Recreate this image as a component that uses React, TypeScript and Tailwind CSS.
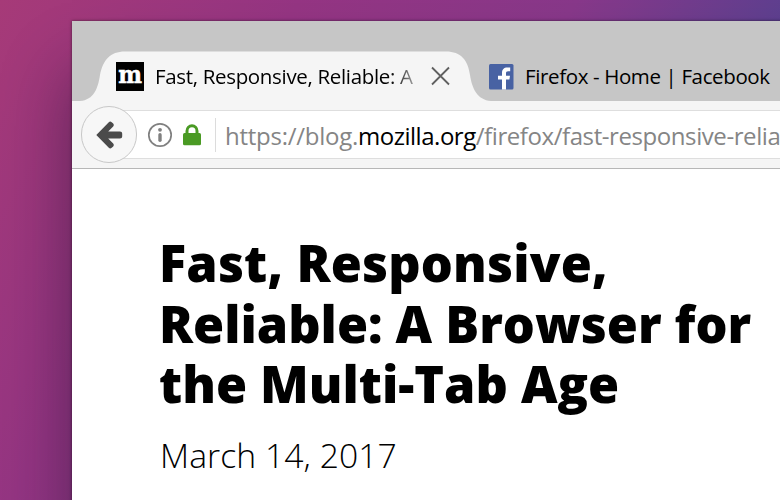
function TabStrip() {
  return (
    <div className="relative isolate flex h-[80px] items-start bg-[#c6c6c6]">
      <svg className="absolute top-0 left-0 -z-10" width="708" height="80" viewBox="0 0 708 80">
        <path
          d="M0 80H8C22 79 26 67 28 54C31 39 38 30.5 53 30.5H374C389 30.5 396 39 398 54C400 67 405 79 419 80Z"
          fill="#f5f5f5"
        />
      </svg>
      <div className="flex h-[80px] w-[416px] shrink-0 items-start pt-[41px] pl-[44px]">
        <svg className="shrink-0" width="28" height="29" viewBox="0 0 28 29">
          <rect width="28" height="29" fill="black" />
          <text
            x="2.3"
            y="21"
            fill="white"
            stroke="white"
            strokeWidth="0.5"
            textLength="23.8"
            lengthAdjust="spacingAndGlyphs"
            className="font-['DejaVu_Serif',serif] text-[24px] font-bold"
          >
            m
          </text>
        </svg>
        <div className="ml-[11px] w-[262px] shrink-0 overflow-hidden bg-linear-to-r from-black from-88% to-[#b8b8b8] bg-clip-text text-[20.5px] leading-[28px] tracking-[-0.33px] whitespace-nowrap text-transparent">
          Fast, Responsive, Reliable: A
        </div>
        <svg className="mt-[4px] ml-[14px] shrink-0" width="20" height="20" viewBox="0 0 20 20">
          <path d="M1 1.5L18 18.5M18 1.5L1 18.5" stroke="#606060" strokeWidth="1.8" />
        </svg>
      </div>
      <div className="flex shrink-0 items-start pt-[41px]">
        <svg className="mt-[2px] ml-[1px]" width="25" height="26" viewBox="0 0 25 26">
          <rect width="24.5" height="25.5" rx="1.5" fill="#4862a3" />
          <path
            d="M13 25.5V15.5H9V11.7H13V9C13 5.5 15 3.6 18.2 3.6H21.2V7.2H19.2C17.4 7.2 17 8 17 9.3V11.7H21L20.4 15.5H17V25.5Z"
            fill="white"
          />
        </svg>
        <div className="ml-[11px] text-[20.5px] leading-[28px] tracking-[-0.37px] whitespace-nowrap text-black">
          Firefox - Home | Facebook
        </div>
      </div>
    </div>
  );
}

function NavBar() {
  return (
    <div className="flex h-[68px] items-start border-b border-[#b7b7b7] bg-[#f5f5f5] pt-[5px] pl-[9px]">
      <div className="z-10 flex h-[57px] w-[56px] shrink-0 items-center justify-center rounded-full border border-[#c8c8c8] bg-[#f7f7f7]">
        <svg width="28" height="30" viewBox="0 0 28 30">
          <path
            d="M1.3 15L13.8 2.2Q15.2 0.9 16.7 2.2L18.2 3.6Q19.6 5 18.2 6.5L13.2 11.5H25Q27.2 11.5 27.2 13.5V16.5Q27.2 18.5 25 18.5H13.2L18.2 23.5Q19.6 25 18.2 26.4L16.7 27.8Q15.2 29.1 13.8 27.8Z"
            fill="#4b4b4b"
          />
        </svg>
      </div>
      <div className="mt-[4px] -ml-[28px] flex h-[49px] w-[671px] shrink-0 items-center border-y border-[#dedede] bg-white pl-[38px]">
        <svg className="shrink-0" width="26" height="26" viewBox="0 0 26 26">
          <circle cx="13" cy="13" r="11.2" fill="none" stroke="#808080" strokeWidth="1.7" />
          <circle cx="13" cy="7.8" r="1.9" fill="#808080" />
          <path d="M13 12.8V18.2" stroke="#808080" strokeWidth="3.4" strokeLinecap="round" />
        </svg>
        <svg className="ml-[9px] shrink-0" width="20" height="22" viewBox="0 0 20 22">
          <path d="M5 10V7A5 5.2 0 0 1 15 7V10" fill="none" stroke="#4a9a24" strokeWidth="3" />
          <rect x="1" y="9" width="18" height="12.3" rx="1.5" fill="#4a9a24" />
        </svg>
        <div className="ml-[13px] h-[34px] w-px shrink-0 bg-[#dcdcdc]" />
        <div className="mt-[3px] flex min-w-0 flex-1 overflow-hidden pl-[9px] text-[24px] leading-[34px] whitespace-nowrap text-[#858585]">
          <span className="tracking-[-0.26px]">https://blog.</span>
          <span className="tracking-[-0.48px] text-black">mozilla.org</span>
          <span className="tracking-[-0.42px]">/firefox/fast-responsive-relia</span>
        </div>
      </div>
    </div>
  );
}

export default function App() {
  return (
    <div className="h-[500px] w-[780px] overflow-hidden bg-[linear-gradient(120deg,#a63a78_0%,#953583_28%,#88388a_54%,#5c4090_75%)] pt-[21px] pl-[72px] font-['Open_Sans','Noto_Sans',sans-serif]">
      <div className="h-[600px] w-[900px] bg-white shadow-[0_52px_64px_0px_rgba(20,15,40,0.48),0_0_3px_rgba(0,0,0,0.5)]">
        <div className="w-[708px]">
          <TabStrip />
          <NavBar />
        </div>
        <main className="pt-[64px] pl-[87px] font-['Open_Sans',sans-serif] text-black">
          <h1 className="text-[50.4px] leading-[60.6px] font-extrabold tracking-[-0.02px] whitespace-nowrap">
            <span className="tracking-[0.16px]">Fast, Responsive,</span>
            <br />
            Reliable: A Browser for
            <br />
            the Multi-Tab Age
          </h1>
          <p className="mt-[17px] ml-[1px] text-[33.7px] leading-[46px] font-[350] tracking-[0.05px]">March 14, 2017</p>
        </main>
      </div>
    </div>
  );
}
